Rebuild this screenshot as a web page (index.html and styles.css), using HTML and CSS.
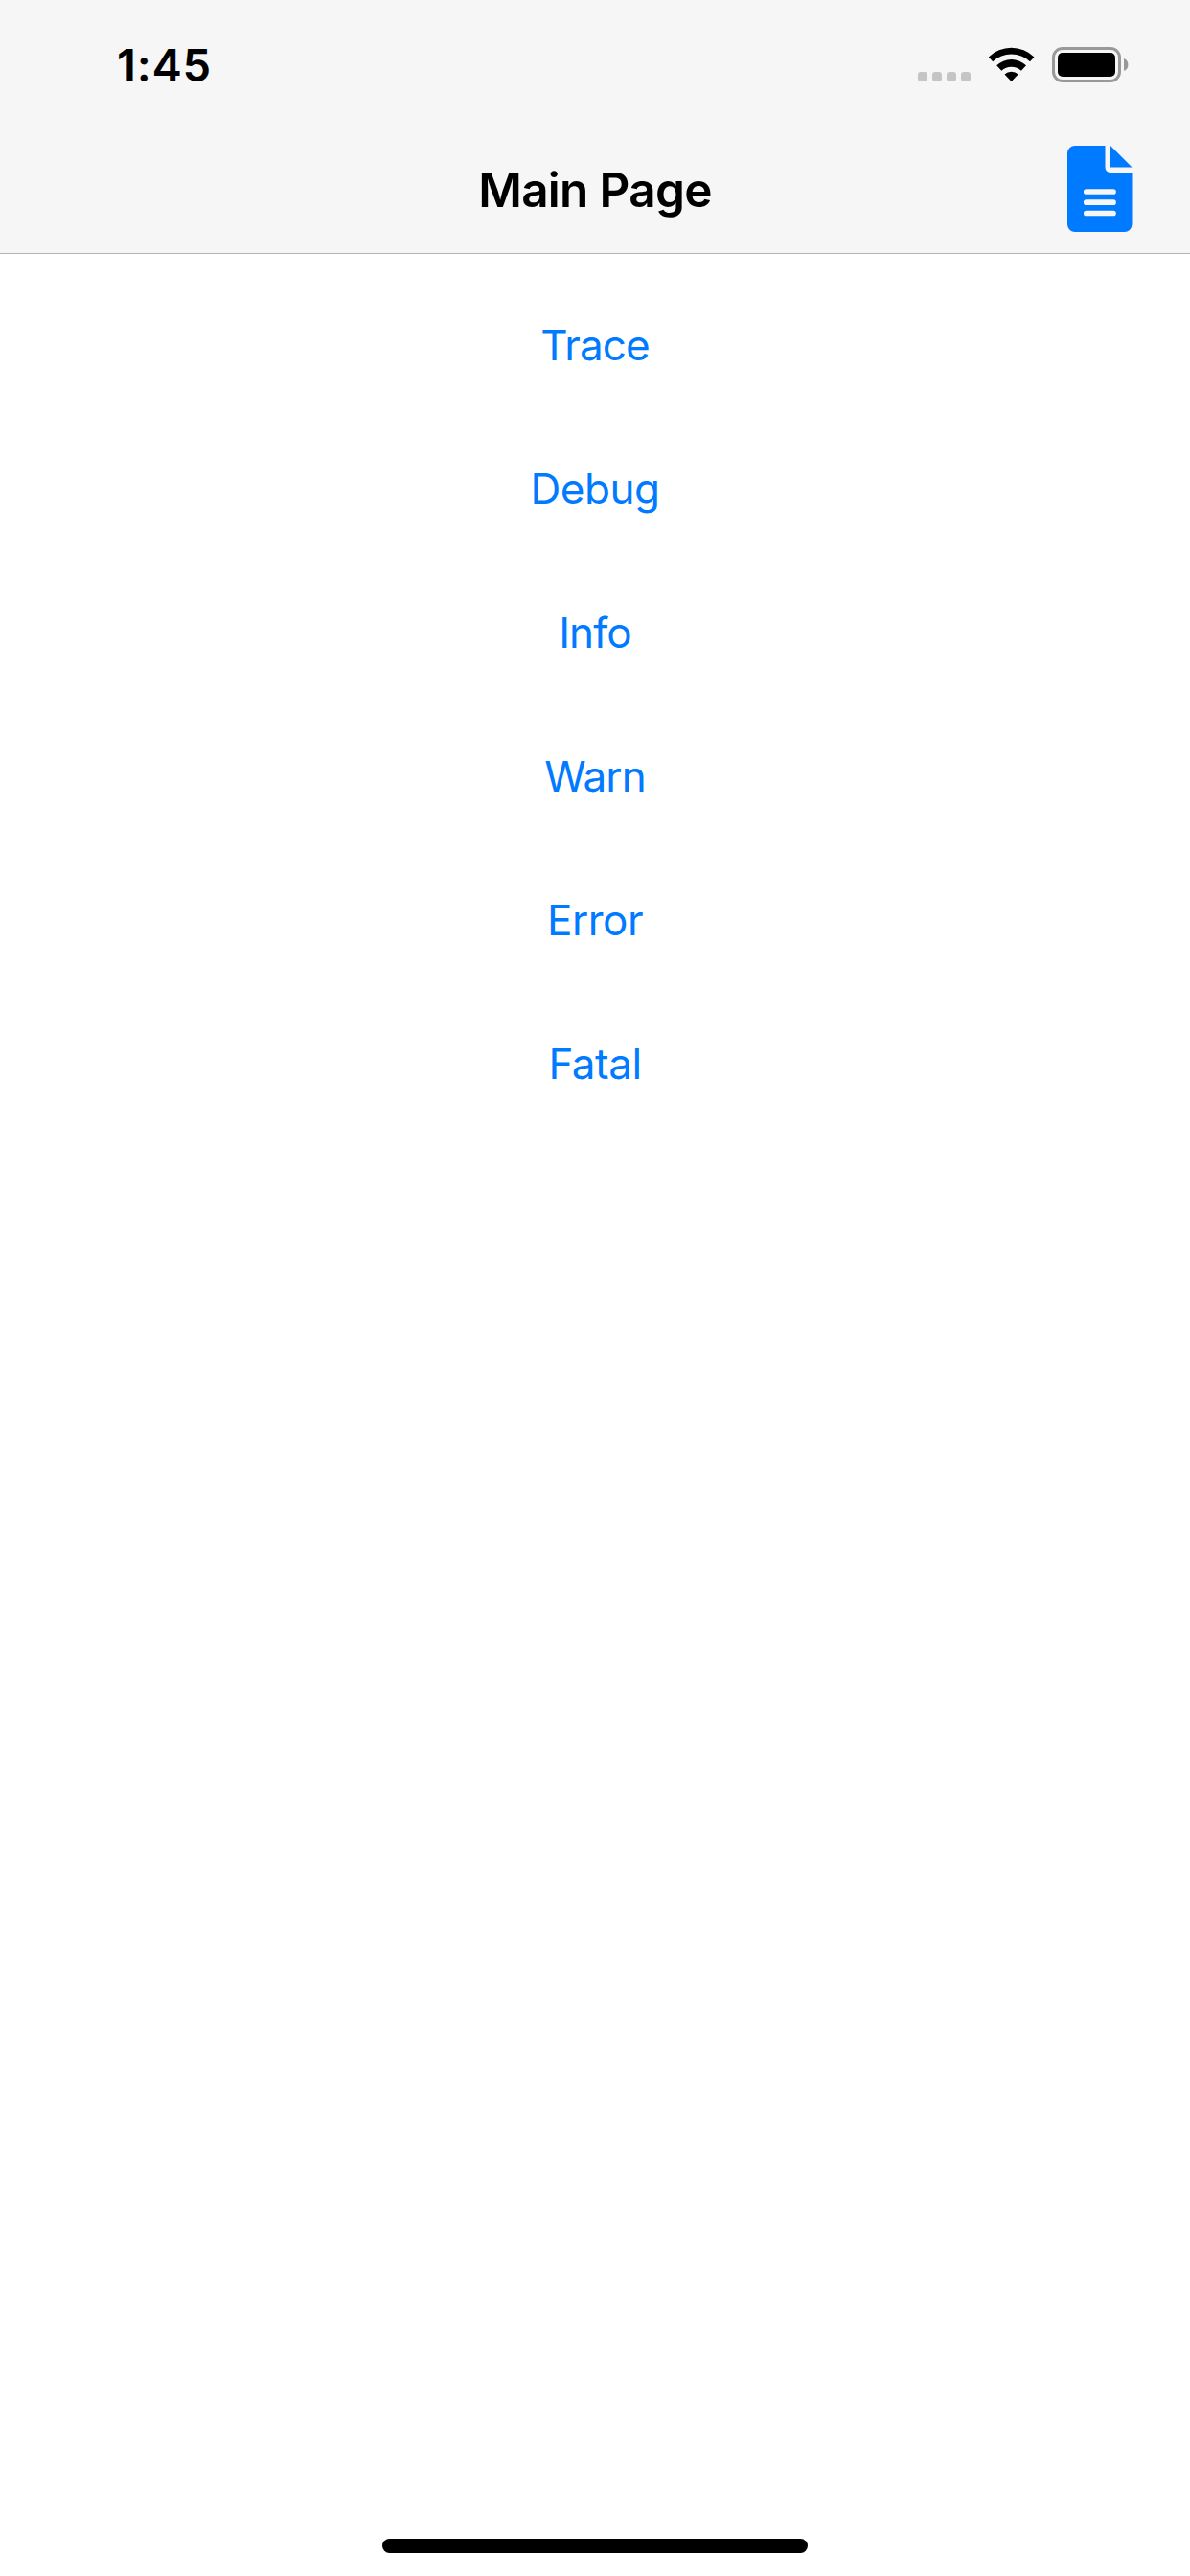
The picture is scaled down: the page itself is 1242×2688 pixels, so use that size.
FILE: index.html
```html
<!DOCTYPE html>
<html lang="en">
<head>
<meta charset="utf-8">
<title>Main Page</title>
<link rel="stylesheet" href="styles.css">
</head>
<body>
<div class="screen">
  <header class="header">
    <div class="status-bar">
      <span class="time">1:45</span>
      <svg class="status-icons" width="220" height="38" viewBox="958 49 220 38" aria-hidden="true">
        <g fill="#c5c5c5">
          <rect x="958" y="75" width="10" height="10" rx="3"/>
          <rect x="973" y="75" width="10" height="10" rx="3"/>
          <rect x="988" y="75" width="10" height="10" rx="3"/>
          <rect x="1003" y="75" width="10" height="10" rx="3"/>
        </g>
        <path d="M1031.8 59.5A34 34 0 0 1 1079.4 59.5L1075 64.2A28.5 28.5 0 0 0 1036.2 64.2ZM1040.2 68.3A22 22 0 0 1 1071 68.3L1065.900 73.800A15 15 0 0 0 1045.300 73.800ZM1048.500 77.500A10.500 10.500 0 0 1 1062.700 77.500L1055.600 85Z"/>
        <rect x="1099.500" y="50.500" width="69" height="34" rx="9.500" fill="none" stroke="#999" stroke-width="3"/>
        <rect x="1104" y="55" width="60" height="25" rx="5"/>
        <path d="M1173 61A7 7 0 0 1 1173 74Z" fill="#999"/>
      </svg>
    </div>
    <div class="nav-bar">
      <h1 class="title">Main Page</h1>
      <button class="log-button" aria-label="Log">
        <svg width="68" height="90" viewBox="0 0 68 90">
          <path fill="#007aff" d="M8 0H39.500V22.500A5.500 5.500 0 0 0 45 28H67.500V82A8 8 0 0 1 59.500 90H8A8 8 0 0 1 0 82V8A8 8 0 0 1 8 0ZM45 0L67.500 22.500H45Z"/>
          <path stroke="#f6f6f6" stroke-width="5.700" stroke-linecap="round" d="M19.800 48H48M19.800 59.200H48M19.800 70.500H48"/>
        </svg>
      </button>
    </div>
  </header>
  <main class="levels">
    <button class="level">Trace</button>
    <button class="level level-wide">Debug</button>
    <button class="level">Info</button>
    <button class="level">Warn</button>
    <button class="level level-wide">Error</button>
    <button class="level level-wide">Fatal</button>
  </main>
  <div class="home-indicator"></div>
</div>
</body>
</html>
```

FILE: styles.css
```css
* {
  box-sizing: border-box;
}

body {
  margin: 0;
  font-family: Inter, "Liberation Sans", sans-serif;
  background: #fff;
}

button {
  padding: 0;
  border: 0;
  background: none;
  font: inherit;
}

.screen {
  display: flex;
  flex-direction: column;
  height: 2688px;
  padding-bottom: 24px;
}

.header {
  height: 265px;
  background: #f6f6f6;
  border-bottom: 1px solid #b3b3b3;
}

.status-bar {
  display: flex;
  justify-content: space-between;
  align-items: flex-start;
  height: 132px;
  padding: 49px 64px 0 122px;
}

.time {
  margin-top: -11px;
  font-size: 47px;
  font-weight: 600;
  line-height: 60px;
  letter-spacing: 0.8px;
}

.status-icons {
  display: block;
}

.nav-bar {
  display: grid;
  grid-template-columns: 1fr auto 1fr;
  align-items: center;
  height: 130px;
  padding: 0 60px;
}

.title {
  grid-column: 2;
  margin: 0;
  padding-top: 2px;
  font-size: 49.5px;
  font-weight: 600;
  line-height: 60px;
  letter-spacing: -0.7px;
}

.log-button {
  justify-self: end;
  height: 90px;
}

.log-button svg {
  display: block;
}

.levels {
  flex: 1;
  display: flex;
  flex-direction: column;
  align-items: center;
  gap: 90px;
  padding-top: 65px;
}

.level {
  height: 60px;
  color: #007aff;
  font-size: 44px;
  line-height: 60px;
  letter-spacing: -0.9px;
}

.level-wide {
  letter-spacing: -0.5px;
}

.home-indicator {
  align-self: center;
  width: 444px;
  height: 15px;
  border-radius: 8px;
  background: #000;
}
```
